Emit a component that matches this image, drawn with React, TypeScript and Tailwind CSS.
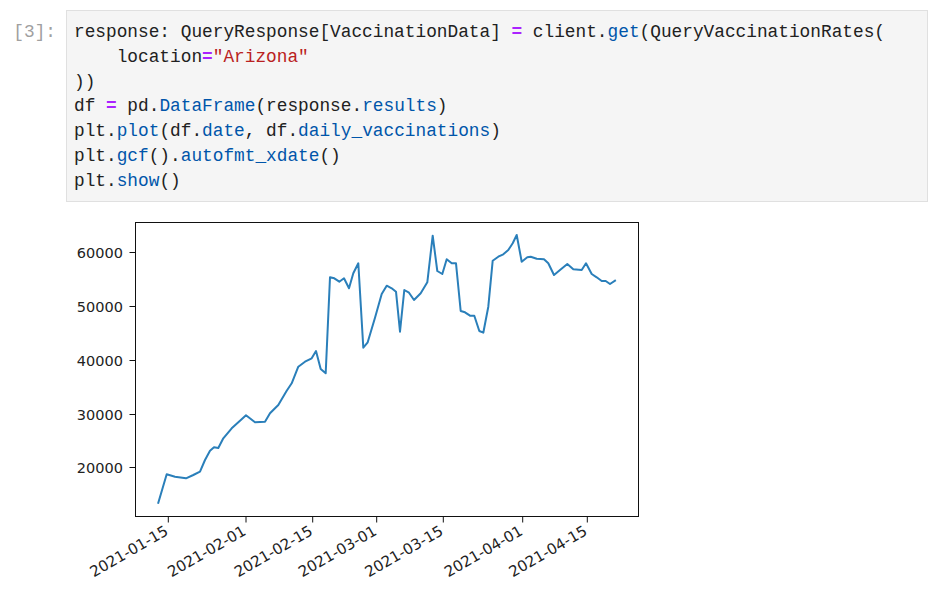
const line: [number, number][] = [
  [158.3, 502.7], [166.7, 474.3], [175, 476.7], [186, 478.3], [193.3, 475], [200, 471.7],
  [205, 460], [210, 450.7], [214, 447.3], [218.3, 448], [223.3, 438.3], [231.7, 428.3],
  [240, 420.7], [246, 415.3], [255, 422.3], [265, 421.7], [270, 413.3], [278.3, 405],
  [286.7, 390.7], [291.7, 383.3], [298.3, 366.7], [305, 361.7], [311.7, 358.3], [316, 351],
  [320.7, 369], [325.7, 373.3], [330, 277.3], [334.3, 278.3], [339.3, 281.7], [344, 278.3],
  [349, 288.3], [353.3, 273.3], [358.3, 263.3], [363.3, 347.7], [367.7, 342.3], [375, 317.7],
  [381.7, 294], [386.7, 285.7], [391.7, 288.3], [396, 291.7], [400, 331.7], [404.3, 290],
  [409, 292.7], [414, 300], [420.7, 293.3], [427.3, 282.3], [432.7, 235.7], [437.3, 271],
  [442.3, 274], [446.7, 259.3], [451.7, 263.3], [456, 263.3], [460.7, 311], [465, 312.3],
  [470, 315.7], [474.3, 315.7], [479.3, 331], [483.3, 332.7], [488.3, 306.7], [492.7, 260.7],
  [498.3, 256.7], [503.3, 254.3], [508.3, 250], [512.7, 243.3], [516.7, 235], [521.7, 261.7],
  [527.3, 257.3], [530.7, 256.7], [536.7, 258.7], [544, 259.3], [548.3, 263.3], [554, 275],
  [560, 270], [567.3, 264], [573.3, 269.3], [581.7, 270], [586, 263.3], [591.7, 274],
  [596.7, 277.3], [601.7, 281], [605.7, 281], [610, 284], [615, 280.7],
]

const yTicks = [
  { label: '60000', y: 252 },
  { label: '50000', y: 306 },
  { label: '40000', y: 360 },
  { label: '30000', y: 414 },
  { label: '20000', y: 467 },
]

const xTicks = [
  { label: '2021-01-15', x: 168.3 },
  { label: '2021-02-01', x: 246 },
  { label: '2021-02-15', x: 312.7 },
  { label: '2021-03-01', x: 376.7 },
  { label: '2021-03-15', x: 443.3 },
  { label: '2021-04-01', x: 522.7 },
  { label: '2021-04-15', x: 587.3 },
]

// axes box in page coordinates
const ax = { left: 135.5, top: 222.5, right: 638.5, bottom: 516.5 }

function Op({ children }: { children: string }) {
  return <span className="text-[#aa22ff] font-bold">{children}</span>
}

function Prop({ children }: { children: string }) {
  return <span className="text-[#0055aa]">{children}</span>
}

function Chart() {
  return (
    <svg width={873} height={402} className="block">
      <g transform="translate(-66,-202)" fontFamily="'DejaVu Sans', sans-serif" fontSize={14.5} fill="#222">
        <polyline
          points={line.map(([x, y]) => `${x},${y}`).join(' ')}
          fill="none"
          stroke="#2a7fba"
          strokeWidth={2}
          strokeLinejoin="round"
          strokeLinecap="square"
        />
        <rect
          x={ax.left}
          y={ax.top}
          width={ax.right - ax.left}
          height={ax.bottom - ax.top}
          fill="none"
          stroke="#111"
          strokeWidth={1}
        />
        {yTicks.map((t) => (
          <g key={t.label}>
            <line x1={ax.left - 6} x2={ax.left} y1={t.y + 0.5} y2={t.y + 0.5} stroke="#111" strokeWidth={1} />
            <text x={123} y={t.y + 5.5} textAnchor="end">
              {t.label}
            </text>
          </g>
        ))}
        {xTicks.map((t) => (
          <g key={t.label}>
            <line x1={t.x} x2={t.x} y1={ax.bottom} y2={ax.bottom + 6} stroke="#111" strokeWidth={1} />
            <text
              x={t.x + 1}
              y={534}
              fontSize={15}
              textAnchor="end"
              transform={`rotate(-30, ${t.x + 1}, 534)`}
            >
              {t.label}
            </text>
          </g>
        ))}
      </g>
    </svg>
  )
}

export default function App() {
  return (
    <div className="w-[939px] h-[604px] overflow-hidden bg-white">
      <div className="flex pt-[10px]">
        <div className="w-[66px] shrink-0 pt-[10px] pr-[10px] text-right font-['Liberation_Mono',monospace] text-[17.8px] leading-[24.8px] text-[#a0a0a0]">
          [3]:
        </div>
        <div className="w-[862px] border border-[#e0e0e0] bg-[#f5f5f5] pt-[9px] pb-[7px] pl-[7px]">
          <pre className="font-['Liberation_Mono',monospace] text-[17.8px] leading-[24.8px] text-[#212121]">
            response: QueryResponse[VaccinationData] <Op>=</Op> client.<Prop>get</Prop>(QueryVaccinationRates(
            {'\n'}
            {'    '}location<Op>=</Op>
            <span className="text-[#ba2121]">"Arizona"</span>
            {'\n'}
            )){'\n'}
            df <Op>=</Op> pd.<Prop>DataFrame</Prop>(response.<Prop>results</Prop>){'\n'}
            plt.<Prop>plot</Prop>(df.<Prop>date</Prop>, df.<Prop>daily_vaccinations</Prop>){'\n'}
            plt.<Prop>gcf</Prop>().<Prop>autofmt_xdate</Prop>(){'\n'}
            plt.<Prop>show</Prop>()
          </pre>
        </div>
      </div>
      <div className="flex">
        <div className="w-[66px] shrink-0" />
        <Chart />
      </div>
    </div>
  )
}
